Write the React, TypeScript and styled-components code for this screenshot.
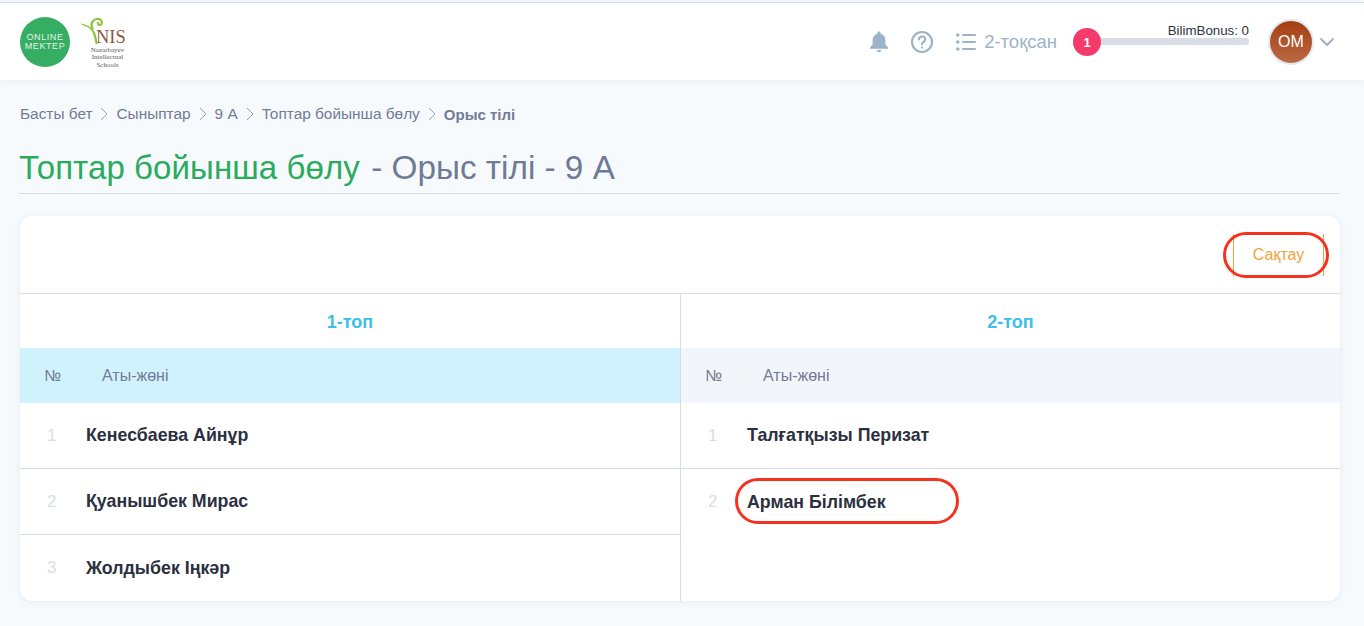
import React from "react";
import styled, { createGlobalStyle } from "styled-components";

const GlobalStyle = createGlobalStyle`
  html, body {
    margin: 0;
    padding: 0;
    background: #f6fafd;
    font-family: "Liberation Sans", Arial, sans-serif;
    overflow: hidden;
  }
  * { box-sizing: border-box; }
`;

const Page = styled.div`
  width: 1364px;
  height: 626px;
  padding-top: 2px;
  background: #f6fafd;
`;

const Header = styled.header`
  height: 78px;
  display: flex;
  align-items: center;
  padding: 0 29px 0 20px;
  background: #fff;
  border-top: 1px solid #dcdcdc;
  box-shadow: 0 1px 6px rgba(150, 170, 190, 0.16);
`;

const Logos = styled.div`
  display: flex;
  align-items: flex-start;
  gap: 10px;
  margin-right: auto;
`;

const OnlineLogo = styled.div`
  width: 50px;
  height: 50px;
  border-radius: 50%;
  background: #35ad62;
  color: #e3f5ea;
  font-size: 9px;
  line-height: 9px;
  letter-spacing: 0.6px;
  text-align: center;
  display: flex;
  flex-direction: column;
  justify-content: center;
`;

const NisLogo = styled.div`
  position: relative;
  width: 46px;
  height: 50px;
  padding-top: 12px;
  text-align: center;
  font-family: "Liberation Serif", serif;
  svg {
    position: absolute;
    left: 0;
    top: 0;
  }
`;

const NisMark = styled.div`
  font-size: 18.5px;
  line-height: 16px;
  color: #8a5a44;
  padding-left: 16px;
  text-align: left;
  margin-bottom: 2px;
`;

const NisCaption = styled.div`
  font-size: 7px;
  line-height: 7.5px;
  color: #5d5d5d;
  padding-left: 9px;
  white-space: nowrap;
`;

const IconButton = styled.span<{ $gap: number }>`
  display: flex;
  color: #9db3c8;
  margin-right: ${(p) => p.$gap}px;
`;

const Quarter = styled.div`
  display: flex;
  align-items: center;
  gap: 8px;
  color: #9db3c8;
  font-size: 18.5px;
  margin-right: 16px;
`;

const BonusBlock = styled.div`
  width: 176px;
  margin-right: 19px;
  margin-bottom: 14px;
`;

const BonusLabel = styled.div`
  font-size: 13.3px;
  line-height: 14px;
  color: #2d3340;
  text-align: right;
`;

const BonusTrack = styled.div`
  position: relative;
  height: 7px;
  margin-left: 10px;
  border-radius: 4px;
  background: #d8dde6;
`;

const BonusBadge = styled.span`
  position: absolute;
  left: -10px;
  top: -10px;
  width: 28px;
  height: 28px;
  border-radius: 50%;
  background: #f43b6b;
  color: #fff;
  font-size: 13px;
  font-weight: 700;
  display: flex;
  align-items: center;
  justify-content: center;
`;

const Avatar = styled.div`
  width: 46px;
  height: 46px;
  border-radius: 50%;
  border: 2px solid #e4e8ef;
  background: linear-gradient(180deg, #a63d11, #b96a45);
  color: #fff;
  font-size: 16px;
  display: flex;
  align-items: center;
  justify-content: center;
`;

const Chevron = styled.span`
  display: flex;
  color: #9db3c8;
  margin-left: 5px;
`;

const Content = styled.main`
  padding: 24px 24px 0 20px;
`;

const Breadcrumbs = styled.nav`
  display: flex;
  align-items: center;
  height: 20px;
  font-size: 15.4px;
  color: #737b96;
`;

const Crumb = styled.span<{ $current?: boolean }>`
  font-weight: ${(p) => (p.$current ? 700 : 400)};
  font-size: ${(p) => (p.$current ? "15px" : "inherit")};
`;

const CrumbArrow = styled.span`
  display: flex;
  margin: 0 8px;
  color: #9aa3b5;
`;

const TitleRow = styled.h1`
  margin: 25px 0 22px -1px;
  height: 45px;
  border-bottom: 1px solid #d8dde3;
  font-size: 33.3px;
  line-height: 37px;
  font-weight: 400;
  color: #6f7a96;
  white-space: nowrap;
`;

const TitleAccent = styled.span`
  color: #2aab5e;
  font-size: 33px;
  letter-spacing: 0.1px;
  margin-right: 2px;
`;

const Card = styled.section`
  height: 385px;
  background: #fff;
  border-radius: 12px;
  box-shadow: 0 1px 6px rgba(150, 170, 190, 0.2);
  overflow: hidden;
`;

const Toolbar = styled.div`
  height: 78px;
  display: flex;
  align-items: center;
  justify-content: flex-end;
  padding: 0 16px 0 0;
  border-bottom: 1px solid #dcdfe6;
`;

const SaveButton = styled.button`
  position: relative;
  width: 91px;
  height: 42px;
  background: #fff;
  border: none;
  border-left: 1px solid #f2a13d;
  border-right: 1px solid #f2a13d;
  color: #f2a13d;
  font-family: inherit;
  font-size: 16px;
  padding: 0;
`;

const RedRing = styled.span`
  position: absolute;
  inset: -2px -6px -2px -11px;
  border: 3.5px solid #f5321f;
  border-radius: 23px;
  pointer-events: none;
`;

const Groups = styled.div`
  display: grid;
  grid-template-columns: 660px 1fr;
`;

const Group = styled.div`
  & + & {
    border-left: 1px solid #d5dbe7;
  }
`;

const GroupTitle = styled.div`
  height: 54px;
  padding-top: 2px;
  display: flex;
  align-items: center;
  justify-content: center;
  color: #3cbfe9;
  font-size: 18px;
  font-weight: 700;
`;

const TableHead = styled.div<{ $active?: boolean }>`
  height: 55px;
  display: flex;
  align-items: center;
  padding-left: 24px;
  background: ${(p) => (p.$active ? "#cff2fd" : "#f2f6fa")};
  color: #737b96;
  font-size: 16px;
`;

const HeadNumber = styled.span`
  width: 58px;
`;

const Row = styled.div`
  position: relative;
  height: 66px;
  display: flex;
  align-items: center;
  padding-left: 27px;
  &:not(:last-child) {
    border-bottom: 1px solid #d5dbe7;
  }
`;

const RowNumber = styled.span`
  width: 39px;
  color: #d9dee5;
  font-size: 17px;
`;

const RowName = styled.span`
  position: relative;
  color: #2b3040;
  font-size: 17.8px;
  font-weight: 700;
  white-space: nowrap;
`;

const NameRing = styled.span`
  position: absolute;
  left: -12px;
  top: -14px;
  width: 224px;
  height: 46px;
  border: 3px solid #f5321f;
  border-radius: 23px;
  pointer-events: none;
`;

const groups = [
  {
    title: "1-топ",
    active: true,
    students: ["Кенесбаева Айнұр", "Қуанышбек Мирас", "Жолдыбек Іңкәр"],
  },
  {
    title: "2-топ",
    active: false,
    students: ["Талғатқызы Перизат", "Арман Білімбек"],
  },
];

const crumbs = ["Басты бет", "Сыныптар", "9 А", "Топтар бойынша бөлу"];

export default function App() {
  return (
    <Page>
      <GlobalStyle />
      <Header>
        <Logos>
          <OnlineLogo>
            <span>ONLINE</span>
            <span>MEKTEP</span>
          </OnlineLogo>
          <NisLogo>
            <svg width="28" height="30" viewBox="0 0 28 30" fill="none">
              <path
                d="M17.500 27C17 20 15.500 14 11 10.500 7.500 8 3.500 7 0 6.500c3 2.500 6 2.500 9 4.500 4 3 5.500 9 6.500 16z"
                fill="#8cc63f"
              />
              <path
                d="M12.500 12C10 7 12.500 2.500 17 2c4-.5 6 3 4.500 5-1.500 1.800-4 .8-3.500-1.200"
                stroke="#8cc63f"
                strokeWidth="2.200"
                strokeLinecap="round"
              />
            </svg>
            <NisMark>NIS</NisMark>
            <NisCaption>Nazarbayev</NisCaption>
            <NisCaption>Intellectual</NisCaption>
            <NisCaption>Schools</NisCaption>
          </NisLogo>
        </Logos>
        <IconButton $gap={21}>
          <svg width="20" height="22" viewBox="0 0 20 22" fill="currentColor">
            <path d="M10 0.5c-1 0-1.6.7-1.6 1.6v.6C5.300 3.500 3.600 6 3.600 9v4.600L1 16.500v1.300h18v-1.300l-2.600-2.900V9c0-3-1.700-5.500-4.800-6.300v-.6c0-.9-.6-1.600-1.600-1.600z" />
            <path d="M7.600 19c.2 1.300 1.200 2.200 2.400 2.200s2.200-.9 2.400-2.200z" />
          </svg>
        </IconButton>
        <IconButton $gap={22}>
          <svg width="24" height="24" viewBox="0 0 24 24" fill="none" stroke="currentColor" strokeWidth="2.200" strokeLinecap="round">
            <circle cx="12" cy="12" r="10" />
            <path d="M8.800 9.300c.3-1.800 1.600-2.800 3.300-2.800 1.800 0 3.200 1.200 3.200 2.800 0 2.500-3.300 2.500-3.300 5" />
            <path d="M12 17.500v.1" />
          </svg>
        </IconButton>
        <Quarter>
          <svg width="20" height="18" viewBox="0 0 20 18" fill="currentColor">
            <circle cx="1.800" cy="2" r="1.800" />
            <circle cx="1.800" cy="9" r="1.800" />
            <circle cx="1.800" cy="16" r="1.800" />
            <rect x="6" y="1" width="14" height="2" rx="1" />
            <rect x="6" y="8" width="14" height="2" rx="1" />
            <rect x="6" y="15" width="14" height="2" rx="1" />
          </svg>
          2-тоқсан
        </Quarter>
        <BonusBlock>
          <BonusLabel>BilimBonus: 0</BonusLabel>
          <BonusTrack>
            <BonusBadge>1</BonusBadge>
          </BonusTrack>
        </BonusBlock>
        <Avatar>ОМ</Avatar>
        <Chevron>
          <svg width="16" height="10" viewBox="0 0 16 10" fill="none" stroke="currentColor" strokeWidth="2" strokeLinecap="round" strokeLinejoin="round">
            <path d="M2 2l6 6 6-6" />
          </svg>
        </Chevron>
      </Header>
      <Content>
        <Breadcrumbs>
          {crumbs.map((c) => (
            <React.Fragment key={c}>
              <Crumb>{c}</Crumb>
              <CrumbArrow>
                <svg width="8" height="14" viewBox="0 0 8 14" fill="none" stroke="currentColor" strokeWidth="1">
                  <path d="M1 1l6 6-6 6" />
                </svg>
              </CrumbArrow>
            </React.Fragment>
          ))}
          <Crumb $current>Орыс тілі</Crumb>
        </Breadcrumbs>
        <TitleRow>
          <TitleAccent>Топтар бойынша бөлу</TitleAccent> - Орыс тілі - 9 А
        </TitleRow>
        <Card>
          <Toolbar>
            <SaveButton>
              Сақтау
              <RedRing />
            </SaveButton>
          </Toolbar>
          <Groups>
            {groups.map((g) => (
              <Group key={g.title}>
                <GroupTitle>{g.title}</GroupTitle>
                <TableHead $active={g.active}>
                  <HeadNumber>№</HeadNumber>
                  Аты-жөні
                </TableHead>
                {g.students.map((s, i) => (
                  <Row key={s}>
                    <RowNumber>{i + 1}</RowNumber>
                    <RowName>
                      {s}
                      {s === "Арман Білімбек" && <NameRing />}
                    </RowName>
                  </Row>
                ))}
              </Group>
            ))}
          </Groups>
        </Card>
      </Content>
    </Page>
  );
}
